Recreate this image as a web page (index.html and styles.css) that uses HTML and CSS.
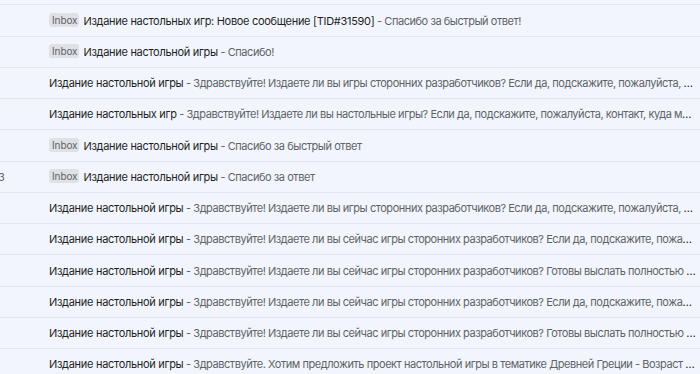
FILE: index.html
```html
<!DOCTYPE html>
<html lang="en">
  <head>
    <meta charset="UTF-8" />
    <meta name="viewport" content="width=device-width, initial-scale=1.0" />
    <title>Inbox</title>
    <link rel="stylesheet" href="styles.css">
  </head>

  <body>
    <div class="list">
      <div class="row"><span class="mail"></span></div>
      <div class="row">
        <span class="mail"><span class="label">Inbox</span><span class="from">Издание настольных игр: Новое сообщение [TID#31590]</span><span class="snip"> - Спасибо за быстрый ответ!</span></span>
      </div>
      <div class="row">
        <span class="mail"><span class="label">Inbox</span><span class="from">Издание настольной игры</span><span class="snip"> - Спасибо!</span></span>
      </div>
      <div class="row">
        <span class="mail"><span class="from">Издание настольной игры</span><span class="snip"> - Здравствуйте! Издаете ли вы игры сторонних разработчиков? Если да, подскажите, пожалуйста, куда можно отправить</span></span>
      </div>
      <div class="row">
        <span class="mail"><span class="from">Издание настольных игр</span><span class="snip"> - Здравствуйте! Издаете ли вы настольные игры? Если да, подскажите, пожалуйста, контакт, куда можно</span></span>
      </div>
      <div class="row">
        <span class="mail"><span class="label">Inbox</span><span class="from">Издание настольной игры</span><span class="snip"> - Спасибо за быстрый ответ</span></span>
      </div>
      <div class="row">
        <span class="date">3</span>
        <span class="mail"><span class="label">Inbox</span><span class="from">Издание настольной игры</span><span class="snip"> - Спасибо за ответ</span></span>
      </div>
      <div class="row">
        <span class="mail"><span class="from">Издание настольной игры</span><span class="snip"> - Здравствуйте! Издаете ли вы игры сторонних разработчиков? Если да, подскажите, пожалуйста, куда можно</span></span>
      </div>
      <div class="row">
        <span class="mail"><span class="from">Издание настольной игры</span><span class="snip"> - Здравствуйте! Издаете ли вы сейчас игры сторонних разработчиков? Если да, подскажите, пожалуйста</span></span>
      </div>
      <div class="row">
        <span class="mail"><span class="from">Издание настольной игры</span><span class="snip"> - Здравствуйте! Издаете ли вы сейчас игры сторонних разработчиков? Готовы выслать полностью готовый</span></span>
      </div>
      <div class="row">
        <span class="mail"><span class="from">Издание настольной игры</span><span class="snip"> - Здравствуйте! Издаете ли вы сейчас игры сторонних разработчиков? Если да, подскажите, пожалуйста</span></span>
      </div>
      <div class="row">
        <span class="mail"><span class="from">Издание настольной игры</span><span class="snip"> - Здравствуйте! Издаете ли вы сейчас игры сторонних разработчиков? Готовы выслать полностью готовый</span></span>
      </div>
      <div class="row">
        <span class="mail"><span class="from">Издание настольной игры</span><span class="snip"> - Здравствуйте. Хотим предложить проект настольной игры в тематике Древней Греции - Возраст игроков</span></span>
      </div>
    </div>
  </body>
</html>
```

FILE: styles.css
```css
* {
  margin: 0;
  padding: 0;
  box-sizing: border-box;
}

body {
  background-color: #f2f6fc;
  font-family: Inter, "Noto Sans", sans-serif;
  font-size: 11px;
  color: #1f1f1f;
  overflow: hidden;
}

.list {
  margin-top: -26px;
}

.row {
  display: flex;
  align-items: center;
  height: 31.27px;
  border-bottom: 1px solid #e3e7ee;
  padding-left: 49px;
  position: relative;
}

/* date column is mostly scrolled off to the left */
.date {
  position: absolute;
  left: -2px;
  color: #5f6368;
  font-size: 11px;
}

.mail {
  flex: 1;
  min-width: 0;
  white-space: nowrap;
  overflow: hidden;
  text-overflow: ellipsis;
  padding-right: 3px;
}

.label {
  display: inline-block;
  background-color: #dfe1e5;
  color: #5f6368;
  font-size: 10px;
  line-height: 14px;
  padding: 0 2px 0 3px;
  border-radius: 3px;
  margin-right: 4px;
  vertical-align: 1px;
  letter-spacing: -0.1px;
}

.from {
  color: #1f1f1f;
  letter-spacing: -0.3px;
}

.snip {
  color: #5f6368;
  letter-spacing: -0.45px;
}
```
